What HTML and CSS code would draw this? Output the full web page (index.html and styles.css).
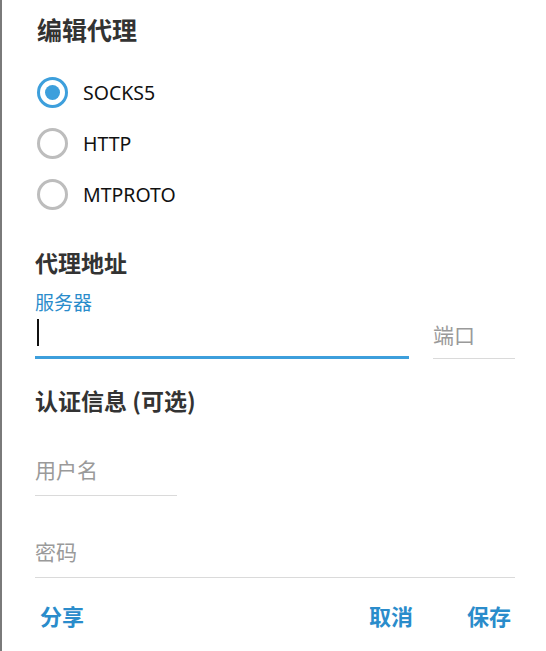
FILE: index.html
```html
<!DOCTYPE html>
<html>
<head>
<meta charset="utf-8">
<link rel="stylesheet" href="styles.css">
</head>
<body>
<div class="dialog">
  <h1 class="title">编辑代理</h1>
  <div class="radios">
    <div class="radio checked"><span class="circle"></span><span class="rlabel">SOCKS5</span></div>
    <div class="radio"><span class="circle"></span><span class="rlabel">HTTP</span></div>
    <div class="radio"><span class="circle"></span><span class="rlabel">MTPROTO</span></div>
  </div>
  <h2 class="section">代理地址</h2>
  <div class="row">
    <div class="field server">
      <div class="flabel">服务器</div>
      <div class="input active"><span class="caret"></span></div>
    </div>
    <div class="field port">
      <div class="input plain"><span class="ph">端口</span></div>
    </div>
  </div>
  <h2 class="section auth">认证信息 (可选)</h2>
  <div class="field user">
    <div class="input plain tall"><span class="ph">用户名</span></div>
  </div>
  <div class="field pass">
    <div class="input plain tall"><span class="ph">密码</span></div>
  </div>
  <div class="actions">
    <span class="btn">分享</span>
    <span class="spacer"></span>
    <span class="btn">取消</span>
    <span class="btn">保存</span>
  </div>
</div>
</body>
</html>
```
FILE: styles.css
```css
html, body {
  margin: 0;
  padding: 0;
  background: #fff;
}
body {
  width: 546px;
  height: 651px;
  overflow: hidden;
  font-family: "Noto Sans", "Noto Sans CJK SC", sans-serif;
  border-left: 2px solid #7a7a7a;
  box-sizing: border-box;
}
.dialog {
  padding: 12px 31px 0 33px;
}
.title {
  margin: 0;
  font-size: 25px;
  font-weight: 700;
  color: #333;
  line-height: 34px;
  padding-left: 2px;
  font-family: "Noto Sans CJK SC", sans-serif;
}
.radios {
  margin-top: 31px;
  display: flex;
  flex-direction: column;
  gap: 20px;
}
.radio {
  display: flex;
  align-items: center;
  height: 31px;
}
.circle {
  width: 31px;
  height: 31px;
  box-sizing: border-box;
  border: 3px solid #bdbdbd;
  border-radius: 50%;
  margin-left: 2px;
  display: flex;
  align-items: center;
  justify-content: center;
}
.radio.checked .circle {
  border-color: #3d9fdc;
}
.radio.checked .circle::after {
  content: "";
  width: 15px;
  height: 15px;
  border-radius: 50%;
  background: #3d9fdc;
}
.rlabel {
  margin-left: 15px;
  font-size: 19.5px;
  color: #111;
  font-family: "Noto Sans", sans-serif;
}
.section {
  margin: 37px 0 0;
  font-size: 23px;
  font-weight: 700;
  color: #333;
  font-family: "Noto Sans CJK SC", sans-serif;
  line-height: 30px;
}
.row {
  display: flex;
  align-items: flex-end;
  gap: 24px;
}
.field.server {
  width: 374px;
}
.flabel {
  font-size: 19px;
  color: #2a8ccb;
  font-family: "Noto Sans CJK SC", sans-serif;
  line-height: 26px;
  margin-top: 12px;
}
.input {
  display: flex;
  box-sizing: border-box;
}
.input.active {
  height: 44px;
  border-bottom: 3px solid #3d9fdc;
  align-items: flex-start;
}
.caret {
  width: 2px;
  height: 27px;
  background: #111;
  margin-left: 2px;
  margin-top: 4px;
}
.input.plain {
  border-bottom: 1px solid #dadada;
  padding-bottom: 10px;
}
.input.plain.tall {
  padding-bottom: 12px;
}
.field.port {
  width: 82px;
}
.ph {
  font-size: 21px;
  line-height: 28px;
  color: #9a9a9a;
  font-family: "Noto Sans CJK SC", sans-serif;
}
.section.auth {
  margin-top: 26px;
}
.field.user {
  width: 142px;
  margin-top: 40px;
}
.field.pass {
  margin-top: 41px;
}
.actions {
  display: flex;
  align-items: center;
  margin-top: 22px;
  padding-left: 5px;
}
.btn {
  font-size: 22px;
  font-weight: 700;
  color: #2a8ccb;
  font-family: "Noto Sans CJK SC", sans-serif;
  line-height: 30px;
}
.spacer {
  flex: 1;
}
.btn + .btn {
  margin-left: 54px;
}
.actions .btn:last-child {
  margin-right: 4px;
}
```
